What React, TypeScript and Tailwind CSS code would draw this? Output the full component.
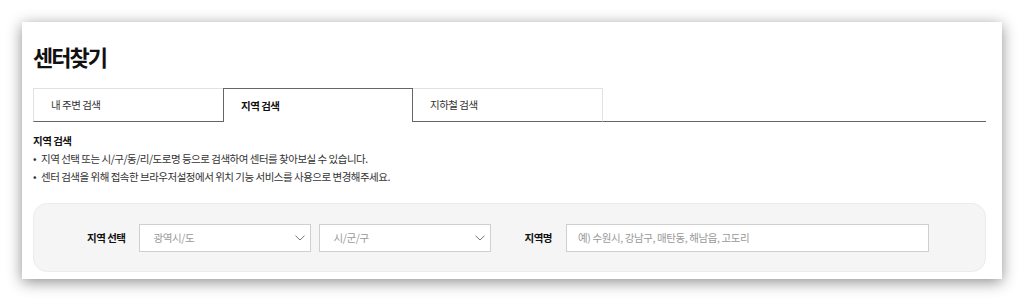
import React from 'react';

const Chevron = () => (
  <svg width="10" height="6" viewBox="0 0 10 6" className="shrink-0">
    <path d="M0.5 0.7 L5 5 L9.5 0.7" fill="none" stroke="#777" strokeWidth="1" />
  </svg>
);

const Select = ({ placeholder }: { placeholder: string }) => (
  <div className="flex items-center justify-between w-[172px] h-[28px] bg-white border border-[#cfcfcf] pl-[14px] pr-[5px]">
    <span className="text-[10.5px] tracking-[-0.4px] text-[#999]">{placeholder}</span>
    <Chevron />
  </div>
);

const tabs = ['내 주변 검색', '지역 검색', '지하철 검색'];

export default function App() {
  return (
    <div
      className="bg-white pt-[22px] pl-[22px] h-[302px]"
      style={{ fontFamily: '"Noto Sans CJK KR", "Noto Sans", sans-serif' }}
    >
      <div className="w-[980px] h-[257px] bg-white shadow-[0_3px_14px_rgba(0,0,0,0.45)] pl-[11px] pr-[16px] pt-[20px]">
        <h1 className="text-[22px] leading-[28px] font-bold tracking-[-2px] text-[#111]">센터찾기</h1>

        <div className="flex mt-[18px] h-[34px]">
          {tabs.map((t, i) =>
            i === 1 ? (
              <div
                key={t}
                className="w-[190px] flex items-center pl-[17px] border-t border-l border-r border-[#666] text-[10.5px] font-bold tracking-[-0.5px] text-[#111]"
              >
                {t}
              </div>
            ) : (
              <div
                key={t}
                className={`w-[190px] flex items-center pl-[17px] border-t border-b border-[#e2e2e2] border-b-[#666] text-[10.5px] tracking-[-0.5px] text-[#333] ${
                  i === 0 ? 'border-l' : 'border-r'
                }`}
              >
                {t}
              </div>
            )
          )}
          <div className="flex-1 border-b border-[#666]" />
        </div>

        <div className="mt-[10px] text-[10.5px] leading-[18px] font-bold tracking-[-0.5px] text-[#111]">지역 검색</div>
        <ul className="text-[10.5px] leading-[18px] tracking-[-0.5px] text-[#333]">
          <li className="flex">
            <span className="w-[8px]">•</span>
            <span>지역 선택 또는 시/구/동/리/도로명 등으로 검색하여 센터를 찾아보실 수 있습니다.</span>
          </li>
          <li className="flex">
            <span className="w-[8px]">•</span>
            <span>센터 검색을 위해 접속한 브라우저설정에서 위치 기능 서비스를 사용으로 변경해주세요.</span>
          </li>
        </ul>

        <div className="mt-[17px] h-[69px] rounded-[14px] bg-[#f5f5f5] border border-[#ececec] flex items-center pl-[53px]">
          <span className="text-[10.5px] font-bold tracking-[-0.5px] text-[#111] mr-[13px]">지역 선택</span>
          <Select placeholder="광역시/도" />
          <div className="w-[8px]" />
          <Select placeholder="시/군/구" />
          <span className="ml-[34px] mr-[14px] text-[10.5px] font-bold tracking-[-0.5px] text-[#111]">지역명</span>
          <div className="w-[363px] h-[28px] bg-white border border-[#cfcfcf] flex items-center pl-[11px]">
            <span className="text-[10.5px] tracking-[-0.4px] text-[#999]">예) 수원시, 강남구, 매탄동, 해남읍, 고도리</span>
          </div>
        </div>
      </div>
    </div>
  );
}
